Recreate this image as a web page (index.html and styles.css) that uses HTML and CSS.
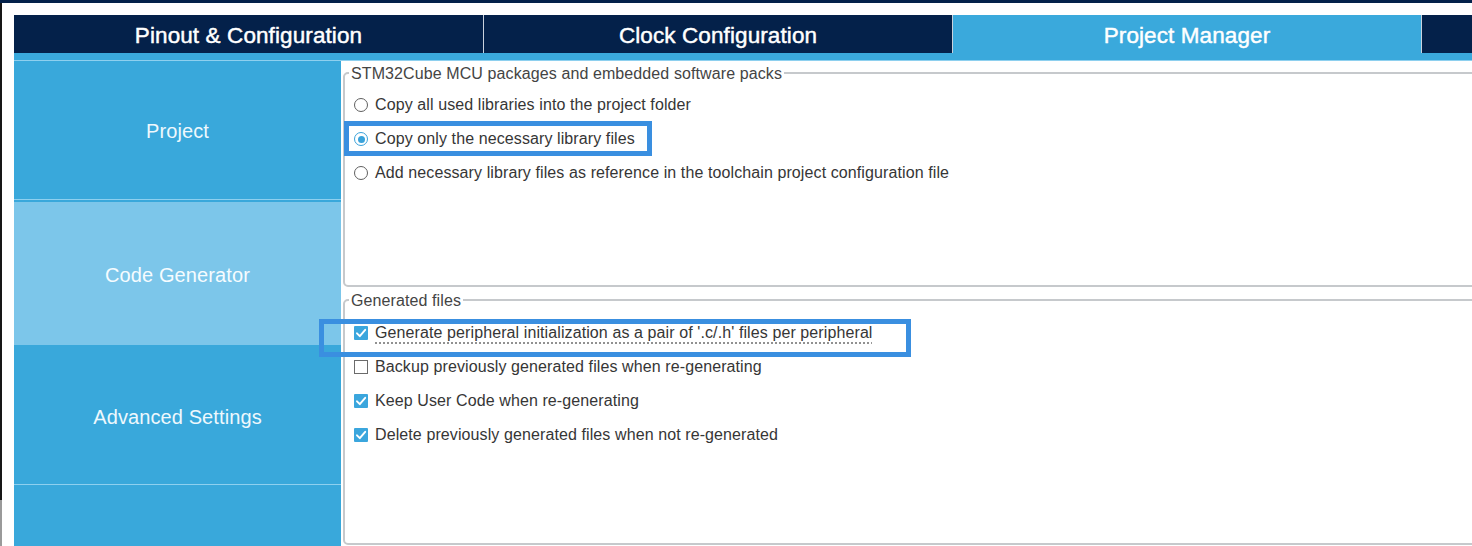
FILE: index.html
```html
<!DOCTYPE html>
<html lang="en">
<head>
<meta charset="utf-8">
<title>Project Manager</title>
<link rel="stylesheet" href="styles.css">
</head>
<body>
<div class="topbar"></div>
<div class="window">
  <div class="tabs">
    <div class="tab">Pinout &amp; Configuration</div>
    <div class="tab">Clock Configuration</div>
    <div class="tab active">Project Manager</div>
    <div class="tab filler"></div>
  </div>
  <div class="strip"></div>
  <div class="main">
    <nav class="side">
      <div class="side-item project">Project</div>
      <div class="side-item selected">Code Generator</div>
      <div class="side-item advanced">Advanced Settings</div>
      <div class="side-item rest"></div>
    </nav>
    <section class="content">
      <div class="group g1">
        <span class="legend">STM32Cube MCU packages and embedded software packs</span>
        <div class="row"><span class="radio"></span><span>Copy all used libraries into the project folder</span></div>
        <div class="row"><span class="radio on"></span><span>Copy only the necessary library files</span></div>
        <div class="row"><span class="radio"></span><span>Add necessary library files as reference in the toolchain project configuration file</span></div>
        <div class="highlight h1"></div>
      </div>
      <div class="group g2">
        <span class="legend">Generated files</span>
        <div class="row"><span class="check on"><svg viewBox="0 0 14 14" width="14" height="14"><path d="M3 7.3 L5.8 10.2 L11.2 3.8" /></svg></span><span class="focus">Generate peripheral initialization as a pair of '.c/.h' files per peripheral</span></div>
        <div class="row"><span class="check"></span><span>Backup previously generated files when re-generating</span></div>
        <div class="row"><span class="check on"><svg viewBox="0 0 14 14" width="14" height="14"><path d="M3 7.3 L5.8 10.2 L11.2 3.8" /></svg></span><span>Keep User Code when re-generating</span></div>
        <div class="row"><span class="check on"><svg viewBox="0 0 14 14" width="14" height="14"><path d="M3 7.3 L5.8 10.2 L11.2 3.8" /></svg></span><span>Delete previously generated files when not re-generated</span></div>
        <div class="highlight h2"></div>
      </div>
    </section>
  </div>
</div>
</body>
</html>
```
FILE: styles.css
```css
html, body {
  margin: 0;
  width: 1472px;
  height: 546px;
  overflow: hidden;
}
body {
  background: #ffffff linear-gradient(to bottom, #161616 500px, #9a9a9a 500px) no-repeat 0 0 / 2px 100%;
  font-family: "Liberation Sans", Arial, sans-serif;
}
.topbar {
  height: 3px;
  background: #04214a;
}
.window {
  padding: 12px 0 0 14px;
}
.tabs {
  display: flex;
  height: 38px;
  background: #04214a;
}
.tab {
  width: 469px;
  box-sizing: border-box;
  padding-top: 3px;
  display: flex;
  align-items: center;
  justify-content: center;
  color: #ffffff;
  font-size: 22.5px;
  -webkit-text-stroke: 0.45px #ffffff;
  letter-spacing: 0.1px;
}
.tab + .tab {
  width: 469px;
  border-left: 1px solid #c9d2dd;
}
.tab.active {
  background: #3aa9dc;
}
.tab.filler {
  flex: 1;
  width: auto;
}
.strip {
  height: 7px;
  background: #3aa9dc;
  border-bottom: 1px solid #8ed0ef;
}
.main {
  display: flex;
  height: 485px;
}
.side {
  width: 327px;
  flex: none;
  background: #39a8db;
  display: flex;
  flex-direction: column;
}
.side-item {
  display: flex;
  align-items: center;
  justify-content: center;
  box-sizing: border-box;
  padding-top: 3px;
  color: #eef8fd;
  font-size: 20px;
  letter-spacing: 0.1px;
}
.side-item.project {
  height: 139px;
  border-bottom: 1px solid #8ed0ef;
  margin-bottom: 2px;
}
.side-item.selected {
  height: 143px;
  background: #7cc6ea;
  color: #f6fcff;
}
.side-item.advanced {
  height: 140px;
  padding-top: 5px;
  border-bottom: 1px solid #8ed0ef;
}
.side-item.rest {
  flex: 1;
}
.content {
  flex: 1;
  padding-left: 2px;
  color: #363636;
  font-size: 16px;
  letter-spacing: 0.1px;
}
.group {
  position: relative;
  width: 1300px;
  box-sizing: border-box;
  border: 2px solid #c6c9cc;
  border-radius: 5px;
  padding-left: 10px;
}
.g1 {
  margin-top: 11px;
  height: 215px;
  padding-top: 14px;
}
.g2 {
  margin-top: 12px;
  height: 246px;
  padding-top: 15px;
  padding-left: 9px;
}
.legend {
  position: absolute;
  top: -9px;
  left: 4px;
  padding: 0 2px;
  line-height: 18px;
  background: #ffffff;
  color: #444444;
}
.row {
  display: flex;
  align-items: center;
  gap: 7px;
  height: 34px;
  white-space: nowrap;
}
.radio {
  width: 14px;
  height: 14px;
  box-sizing: border-box;
  border: 1.3px solid #5f5f5f;
  border-radius: 50%;
  display: flex;
  align-items: center;
  justify-content: center;
  flex: none;
  margin-left: -1px;
}
.radio.on {
  border-color: #3aa2da;
}
.radio.on::after {
  content: "";
  width: 7px;
  height: 7px;
  border-radius: 50%;
  background: #3aa2da;
}
.check {
  width: 14px;
  height: 14px;
  box-sizing: border-box;
  border: 1px solid #6b6b6b;
  background: #ffffff;
  flex: none;
  display: block;
}
.check.on {
  border: none;
  background: #3ba6dd;
  border-radius: 1px;
}
.check svg {
  display: block;
}
.check svg path {
  fill: none;
  stroke: #ffffff;
  stroke-width: 1.9;
  stroke-linecap: round;
  stroke-linejoin: round;
}
.focus {
  text-decoration: underline dotted #777777;
  text-underline-offset: 5px;
}
.highlight {
  position: absolute;
  border: 5px solid #3a8fe0;
  box-sizing: border-box;
}
.h1 {
  left: -1px;
  top: 47px;
  width: 308px;
  height: 35px;
}
.h2 {
  left: -26px;
  top: 18px;
  width: 592px;
  height: 38px;
}
```
